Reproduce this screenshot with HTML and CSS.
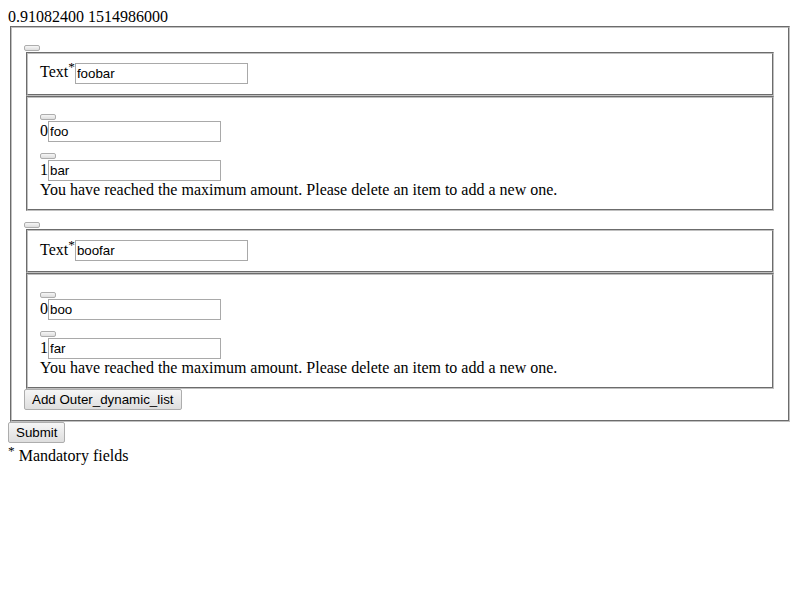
FILE: index.html
```html
<!DOCTYPE html>
<html>
<head>
<meta charset="utf-8">
<link rel="stylesheet" href="styles.css">
</head>
<body>
<div class="stamp">0.91082400 1514986000</div>
<form>
<fieldset class="fs">
<button type="button" class="btn"></button>
<fieldset class="fs">Text<sup>*</sup><input class="field" type="text" value="foobar"></fieldset>
<fieldset class="fs">
<button type="button" class="btn"></button><br>0<input class="field" type="text" value="foo"><br>
<button type="button" class="btn"></button><br>1<input class="field" type="text" value="bar"><br>
You have reached the maximum amount. Please delete an item to add a new one.
</fieldset>
<button type="button" class="btn"></button>
<fieldset class="fs">Text<sup>*</sup><input class="field" type="text" value="boofar"></fieldset>
<fieldset class="fs">
<button type="button" class="btn"></button><br>0<input class="field" type="text" value="boo"><br>
<button type="button" class="btn"></button><br>1<input class="field" type="text" value="far"><br>
You have reached the maximum amount. Please delete an item to add a new one.
</fieldset>
<button type="button" class="btn">Add Outer_dynamic_list</button>
</fieldset>
<button type="submit" class="btn">Submit</button>
</form>
<div class="note"><sup>*</sup> Mandatory fields</div>
</body>
</html>
```
FILE: styles.css
```css
body {
  margin: 8px;
  font-family: "Liberation Serif", serif;
  font-size: 16px;
  color: #000;
  background: #fff;
}
form {
  margin: 0;
}
.fs {
  margin: 0 2px;
  padding: 5.6px 12px 10px;
  border: 2px groove #c0c0c0;
}
.field {
  font-family: "Liberation Sans", sans-serif;
  font-size: 13.333px;
  width: 168px;
  padding: 2px 2px 2px 1px;
  border: 1px solid #a9a9a9;
  margin: 0;
  border-radius: 0;
  background: #fff;
  color: #000;
}
.btn {
  font-family: "Liberation Sans", sans-serif;
  font-size: 13.333px;
  padding: 2px 7px;
  margin: 0;
  border: 1px solid #adadad;
  border-radius: 2px;
  background: linear-gradient(#f6f6f6, #dedede);
  color: #000;
}
```
